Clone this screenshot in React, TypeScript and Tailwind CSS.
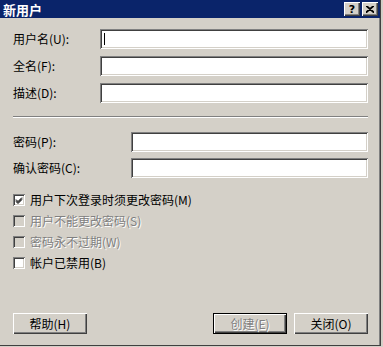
import React from "react";

const sunken =
  "bg-white shadow-[inset_1px_1px_0_#808080,inset_-1px_-1px_0_#ffffff,inset_2px_2px_0_#404040,inset_-2px_-2px_0_#d4d0c8]";
const raised =
  "bg-[#d4d0c8] shadow-[inset_1px_1px_0_#ffffff,inset_-1px_-1px_0_#404040,inset_-2px_-2px_0_#808080]";
const disabledText = "text-[#808080] [text-shadow:1px_1px_0_#ffffff]";

const Field = ({ label, labelWidth, caret }: { label: string; labelWidth: string; caret?: boolean }) => (
  <div className="flex items-center h-[20px]">
    <span className={`${labelWidth} shrink-0 leading-none`}>{label}</span>
    <div className={`relative flex-1 h-[20px] ${sunken}`}>
      {caret && <span className="absolute left-[4px] top-[4px] w-px h-[12px] bg-black" />}
    </div>
  </div>
);

const Check = ({ label, checked, disabled }: { label: string; checked?: boolean; disabled?: boolean }) => (
  <div className="flex items-center h-[21px]">
    <div
      className={`relative w-[12px] h-[12px] shrink-0 ${
        disabled ? "bg-[#d4d0c8]" : "bg-white"
      } shadow-[inset_1px_1px_0_#808080,inset_-1px_-1px_0_#ffffff,inset_2px_2px_0_#404040,inset_-2px_-2px_0_#d4d0c8]`}
    >
      {checked && (
        <svg viewBox="0 0 12 12" className="absolute inset-0 w-[12px] h-[12px]">
          <path d="M3 5.5 L5 7.5 L9 3.5 M3 6.5 L5 8.5 L9 4.5 M3 7.5 L5 9.5 L9 5.5" stroke="#000" strokeWidth="1" fill="none" />
        </svg>
      )}
    </div>
    <span className={`ml-[5px] leading-none ${disabled ? disabledText : ""}`}>{label}</span>
  </div>
);

const Btn = ({ label, disabled, isDefault }: { label: string; disabled?: boolean; isDefault?: boolean }) => (
  <div className={`w-[74px] h-[21px] ${isDefault ? "border border-black" : ""}`}>
    <div className={`w-full h-full flex items-center justify-center leading-none ${raised} ${disabled ? disabledText : ""}`}>
      {label}
    </div>
  </div>
);

export default function App() {
  return (
    <div className="w-[383px] h-[347px] bg-[#d4d0c8] font-['Noto_Sans_CJK_SC',sans-serif] text-[12px] text-black">
      <div className="w-[381px] h-[346px] border-r border-b border-[#404040] flex flex-col">
        {/* title bar */}
        <div className="h-[18px] bg-[#0a246a] flex items-center pl-[3px] pr-[2px] shrink-0">
          <span className="text-white font-bold text-[13px] leading-none">新用户</span>
          <div className="ml-auto flex gap-[2px]">
            <div className={`w-[16px] h-[14px] flex items-center justify-center font-bold text-[11px] leading-none ${raised}`}>
              <span className="font-['DejaVu_Sans',sans-serif]">?</span>
            </div>
            <div className={`w-[16px] h-[14px] flex items-center justify-center ${raised}`}>
              <svg viewBox="0 0 8 7" className="w-[8px] h-[7px]">
                <path d="M0 0 L8 7 M1 0 L8 6 M8 0 L0 7 M7 0 L0 6" stroke="#000" strokeWidth="1.2" fill="none" />
              </svg>
            </div>
          </div>
        </div>

        <div className="flex-1 flex flex-col pl-[13px] pr-[11px] pt-[11px] border-r border-[#808080]">
          <div className="flex flex-col gap-[7px]">
            <Field label="用户名(U):" labelWidth="w-[87px]" caret />
            <Field label="全名(F):" labelWidth="w-[87px]" />
            <Field label="描述(D):" labelWidth="w-[87px]" />
          </div>

          <div className="mt-[13px] h-[2px] border-t border-[#808080] border-b border-b-white" />

          <div className="mt-[14px] flex flex-col gap-[6px]">
            <Field label="密码(P):" labelWidth="w-[118px]" />
            <Field label="确认密码(C):" labelWidth="w-[118px]" />
          </div>

          <div className="mt-[11px] flex flex-col">
            <Check label="用户下次登录时须更改密码(M)" checked />
            <Check label="用户不能更改密码(S)" disabled />
            <Check label="密码永不过期(W)" disabled />
            <Check label="帐户已禁用(B)" />
          </div>

          <div className="mt-auto mb-[11px] flex items-center">
            <Btn label="帮助(H)" />
            <div className="ml-auto flex gap-[7px]">
              <Btn label="创建(E)" disabled isDefault />
              <Btn label="关闭(O)" />
            </div>
          </div>
        </div>
      </div>
    </div>
  );
}
